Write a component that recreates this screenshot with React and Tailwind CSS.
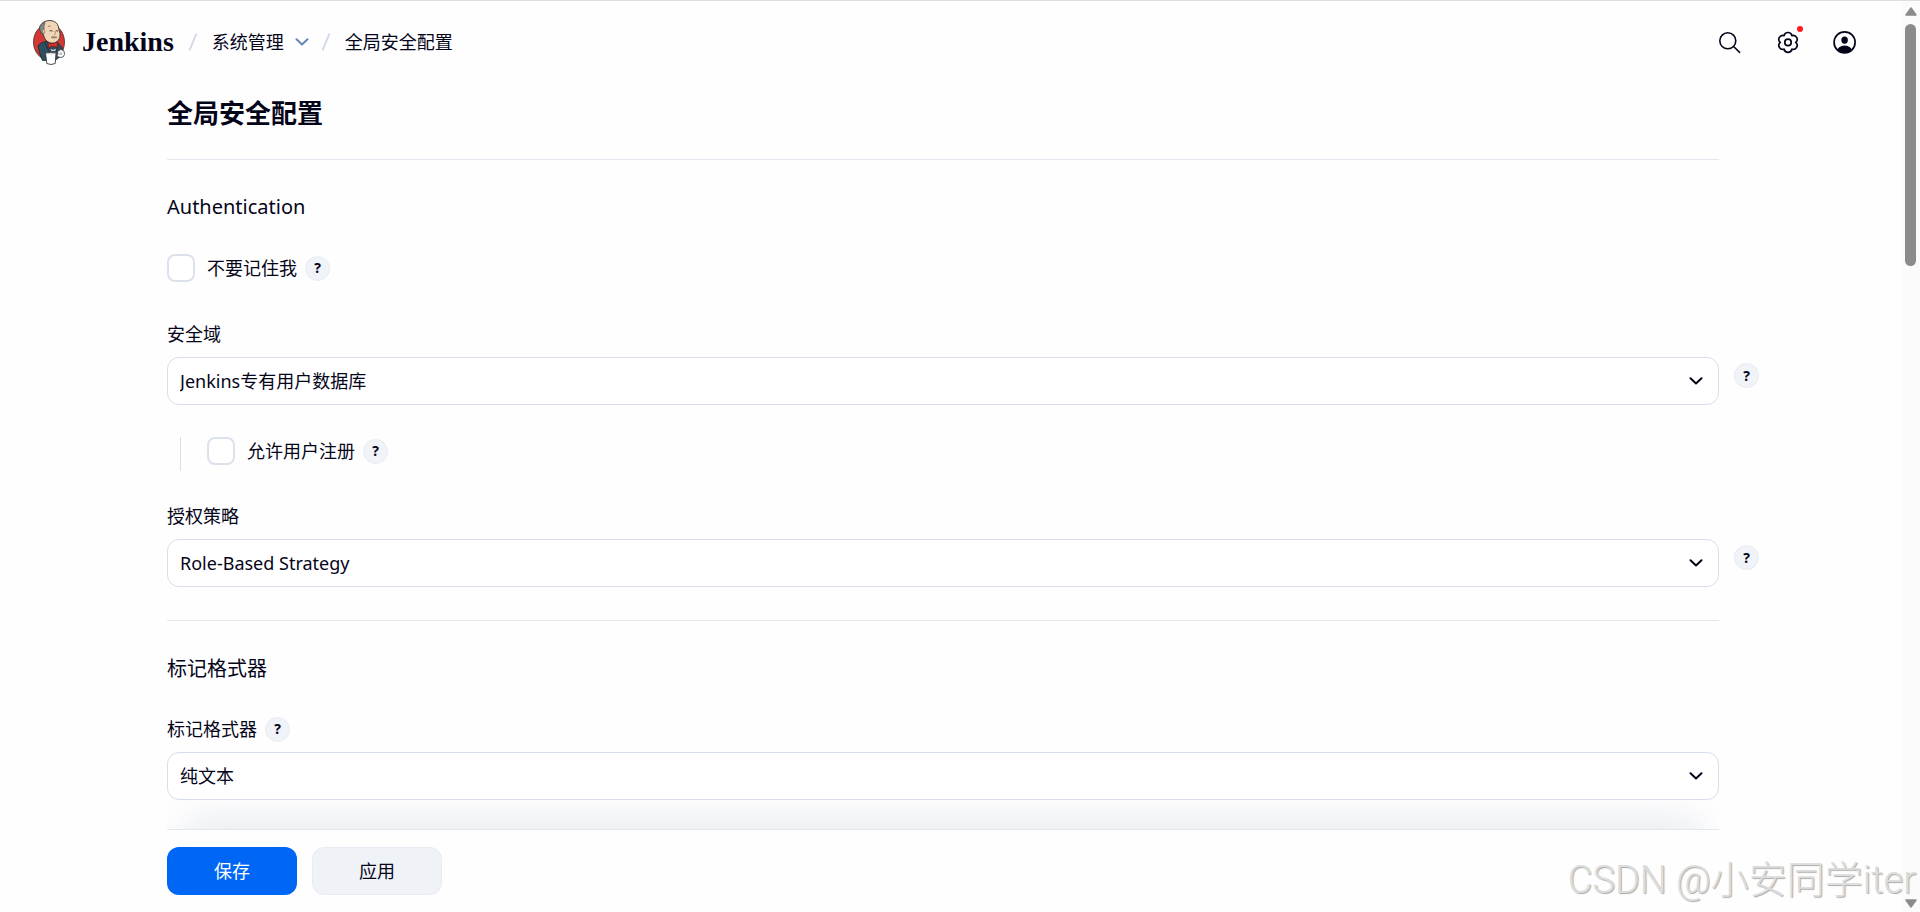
function JenkinsLogo() {
  return (
    <svg width="32" height="45" viewBox="0 0 32 45" aria-hidden="true">
      <ellipse cx="16" cy="22" rx="15.5" ry="18" fill="#d33833" stroke="#5c2320" strokeWidth="0.8" />
      {/* jacket */}
      <path d="M5 25.5 Q8 22.5 12 21.5 L25 23 Q29 26 30 30 L28 36 L22 40.5 H9.5 Q6.5 35 5 25.5 Z" fill="#2f4f60" stroke="#1b2a33" strokeWidth="0.8" />
      <path d="M12 22.5 L16.5 32.5 M25 25.5 L23 32" stroke="#1b2a33" strokeWidth="0.8" fill="none" />
      {/* head */}
      <path d="M7 6 Q10 0.5 17 0.5 Q24 0.8 25.5 7 Q26 11 27 13.5 Q27.5 18 25 21 Q22 24 17.5 23 Q12 21.5 10.5 15 Q6.5 13 7 6 Z" fill="#f0d6b7" stroke="#3b332b" strokeWidth="0.9" />
      <path d="M6.8 6.5 Q9 3 12 2.5 Q10.5 6 11 9.5 L10.5 14.5 Q6 12 6.8 6.5 Z" fill="#85888a" stroke="#3b3b3b" strokeWidth="0.6" />
      <path d="M9.8 10 Q11.5 8.8 12 11 Q12 13.6 10.8 14" fill="#f0d6b7" stroke="#6d5543" strokeWidth="0.5" />
      <path d="M14.8 6.6 Q16 5.6 17.6 6.2" fill="none" stroke="#6d5543" strokeWidth="0.7" />
      <path d="M16.6 11 Q18 10 19.6 11.2 M22.8 11.2 Q24 10.2 25 11.2" fill="none" stroke="#3b332b" strokeWidth="0.9" />
      <path d="M21.6 10.8 Q23.5 14 21 14.8" fill="none" stroke="#8a6d55" strokeWidth="0.7" />
      <path d="M18 17.2 Q20.5 15.8 24 17.2 Q21 19.2 18 17.2" fill="#b9a48d" stroke="#6d5543" strokeWidth="0.5" />
      {/* bow tie */}
      <path d="M15 22.5 L19 24.2 L24 21.8 L24.5 27.5 L19.5 26 L15.5 28 Z" fill="#d33833" stroke="#6b1513" strokeWidth="0.7" />
      <circle cx="19.4" cy="25" r="1.4" fill="#ef3d3a" stroke="#6b1513" strokeWidth="0.5" />
      <path d="M17 28 L20 29.5 L23.5 28 L22.5 31.5 H18 Z" fill="#c9d6de" stroke="#1b2a33" strokeWidth="0.6" />
      {/* mug and hand */}
      <path d="M25 31 Q28 28 31 31 Q32.5 35 30 37 Q27 38.5 24 36 Z" fill="#fff" stroke="#3a3a3a" strokeWidth="0.8" />
      <path d="M27.5 32 L29 35 M25 34 H28" stroke="#6a6a6a" strokeWidth="0.6" />
      <path d="M12.5 33 Q18 31.5 23 33 L22.2 43.5 Q18 45.5 13.8 43.5 Z" fill="#fff" stroke="#3a3a3a" strokeWidth="0.9" />
      <path d="M12.8 33.2 Q18 34.8 22.8 33.2" fill="none" stroke="#a5a5a5" strokeWidth="0.6" />
    </svg>
  );
}

function SearchIcon() {
  return (
    <svg width="24" height="24" viewBox="0 0 24 24" fill="none" stroke="currentColor" strokeWidth="1.6" strokeLinecap="round" aria-hidden="true">
      <circle cx="8.8" cy="10.8" r="8" />
      <path d="M14.6 16.5 L20.6 22.3" />
    </svg>
  );
}

function GearIcon() {
  return (
    <svg width="24" height="24" viewBox="0 0 24 24" fill="none" stroke="currentColor" strokeWidth="1.7" strokeLinejoin="round" aria-hidden="true">
      <path d="M15.9 5.6 A4 4 0 0 1 19.8 12.4 A4 4 0 0 1 15.9 19.2 A4 4 0 0 1 8.1 19.2 A4 4 0 0 1 4.2 12.4 A4 4 0 0 1 8.1 5.6 A4 4 0 0 1 15.9 5.6 Z" />
      <circle cx="12" cy="12.4" r="3.2" />
    </svg>
  );
}

function UserIcon() {
  return (
    <svg width="24" height="24" viewBox="0 0 24 24" aria-hidden="true">
      <defs>
        <clipPath id="user-clip">
          <circle cx="11.6" cy="12.4" r="10.5" />
        </clipPath>
      </defs>
      <ellipse cx="11.6" cy="10.1" rx="3.3" ry="3.7" fill="currentColor" />
      <ellipse cx="11.6" cy="20.9" rx="7.6" ry="5.3" fill="currentColor" clipPath="url(#user-clip)" />
      <circle cx="11.6" cy="12.4" r="10.5" fill="none" stroke="currentColor" strokeWidth="1.7" />
    </svg>
  );
}

function Chevron({ className = '' }) {
  return (
    <svg width="14" height="8" viewBox="0 0 14 8" className={className} aria-hidden="true">
      <path d="M1.5 1.3 L7 6.5 L12.5 1.3" fill="none" stroke="currentColor" strokeWidth="2" strokeLinecap="round" strokeLinejoin="round" />
    </svg>
  );
}

function Slash() {
  return (
    <svg width="10" height="18" viewBox="0 0 10 18" className="shrink-0" aria-hidden="true">
      <path d="M8.5 0.5 L1.5 17.5" stroke="#cdd7e6" strokeWidth="1.8" />
    </svg>
  );
}

function Help({ label, className = '' }) {
  return (
    <button
      type="button"
      aria-label={label}
      className={`flex size-[25px] shrink-0 items-center justify-center rounded-full border border-[#e8ecf2] bg-[#f0f3f7] text-sm leading-none font-bold ${className}`}
    >
      ?
    </button>
  );
}

function Checkbox({ id, label }) {
  return (
    <div className="flex h-7 items-center">
      <input
        id={id}
        type="checkbox"
        className="size-7 shrink-0 appearance-none rounded-lg border-2 border-[#dce1ec] bg-white checked:bg-[#0066ff]"
      />
      <label htmlFor={id} className="ml-3 text-lg leading-6">{label}</label>
      <Help label={`${label} 帮助`} className="ml-2" />
    </div>
  );
}

function Select({ id, label, options, sideHelp, inlineHelp }) {
  return (
    <div>
      <div className="mb-[11px] flex h-6 items-center">
        <label htmlFor={id} className="text-lg leading-6">{label}</label>
        {inlineHelp && <Help label={`${label} 帮助`} className="ml-2" />}
      </div>
      <div className="relative">
        <select
          id={id}
          className="block h-12 w-full appearance-none rounded-xl border border-[#d8deea] bg-white px-3 text-lg"
        >
          {options.map((o) => <option key={o}>{o}</option>)}
        </select>
        <Chevron className="pointer-events-none absolute top-5 right-4" />
        {sideHelp && <Help label={`${label} 帮助`} className="absolute top-1.5 left-full ml-[15px]" />}
      </div>
    </div>
  );
}

function Scrollbar() {
  return (
    <div className="flex w-[19px] shrink-0 flex-col items-center bg-[#fbfbfb] pt-1.5 pb-1 text-[#8b8b8b]">
      <svg width="12" height="9" viewBox="0 0 12 9"><path d="M6 1 L11 8 H1 Z" fill="currentColor" stroke="currentColor" strokeWidth="1.5" strokeLinejoin="round" /></svg>
      <div className="mt-2 h-[242px] w-[11px] rounded-full bg-[#8b8b8b]" />
      <svg width="12" height="9" viewBox="0 0 12 9" className="mt-auto"><path d="M6 8 L11 1 H1 Z" fill="currentColor" stroke="currentColor" strokeWidth="1.5" strokeLinejoin="round" /></svg>
    </div>
  );
}

export default function App() {
  return (
    <div className="relative flex h-screen overflow-hidden border-t border-[#dedede] bg-[#fefefe] font-['Noto_Sans','Noto_Sans_CJK_SC',sans-serif] text-[#05051a]">
      <div className="flex min-w-0 flex-1 flex-col">
        <header className="flex h-[82px] shrink-0 items-center justify-between pr-11 pl-[33px]">
          <nav className="flex items-center text-lg leading-6">
            <a href="#home" className="flex items-center gap-[17px]">
              <JenkinsLogo />
              <span className="font-['Liberation_Serif',serif] text-[28px] leading-8 font-bold">Jenkins</span>
            </a>
            <span className="ml-[14px] flex items-center gap-[14px]">
              <Slash />
              <a href="#manage">系统管理</a>
            </span>
            <button type="button" aria-label="系统管理菜单" className="ml-[11px] text-[#6688b5]">
              <Chevron />
            </button>
            <span className="ml-3 flex items-center gap-[14px]">
              <Slash />
              <a href="#security">全局安全配置</a>
            </span>
          </nav>
          <div className="flex items-center gap-[33px]">
            <button type="button" aria-label="搜索"><SearchIcon /></button>
            <button type="button" aria-label="设置" className="relative">
              <GearIcon />
              <span className="absolute -top-1 -right-[3px] size-1.5 rounded-full bg-[#ff1a1a]" />
            </button>
            <button type="button" aria-label="用户"><UserIcon /></button>
          </div>
        </header>

        <main className="min-h-0 flex-1 pt-[14px] pr-[182px] pl-[167px]">
          <h1 className="text-[26px] leading-8 font-bold">全局安全配置</h1>
          <hr className="mt-[30px] border-[#e3e7ef]" />
          <h2 className="mt-8 mb-8 text-xl leading-[30px]">Authentication</h2>
          <Checkbox id="remember" label="不要记住我" />
          <div className="mt-10">
            <Select id="realm" label="安全域" options={['Jenkins专有用户数据库']} sideHelp />
          </div>
          <div className="mt-8 ml-[13px] h-[34px] border-l border-[#d8deea] pl-[26px]">
            <Checkbox id="signup" label="允许用户注册" />
          </div>
          <div className="mt-[33px]">
            <Select id="strategy" label="授权策略" options={['Role-Based Strategy']} sideHelp />
          </div>
          <hr className="mt-[33px] border-[#e3e7ef]" />
          <h2 className="mt-[33px] mb-[33px] text-xl leading-[30px]">标记格式器</h2>
          <Select id="markup" label="标记格式器" options={['纯文本']} inlineHelp />
        </main>

        <footer className="relative pr-[182px] pl-[167px]">
          {/* soft shadow cast upwards by the sticky bar */}
          <div className="pointer-events-none absolute right-[182px] bottom-full left-[167px] h-[30px] overflow-hidden">
            <div className="mx-7 mt-[30px] h-12 shadow-[0_0_40px_8px_#e6e9ef]" />
          </div>
          <div className="flex gap-[15px] border-t border-[#e3e7ef] py-[17px] text-lg">
            <button type="button" className="h-12 w-[130px] rounded-xl bg-[#0066f5] text-white">保存</button>
            <button type="button" className="h-12 w-[130px] rounded-xl border border-[#e8ecf2] bg-[#eff2f7]">应用</button>
          </div>
        </footer>
      </div>
      <Scrollbar />
      <div className="pointer-events-none absolute right-1 bottom-2 font-['Roboto','Noto_Sans_CJK_SC',sans-serif] text-[38px] leading-[48px] font-light text-[#dddddd] [text-shadow:1px_1px_1px_#aaa]">
        CSDN @小安同学iter
      </div>
    </div>
  );
}
